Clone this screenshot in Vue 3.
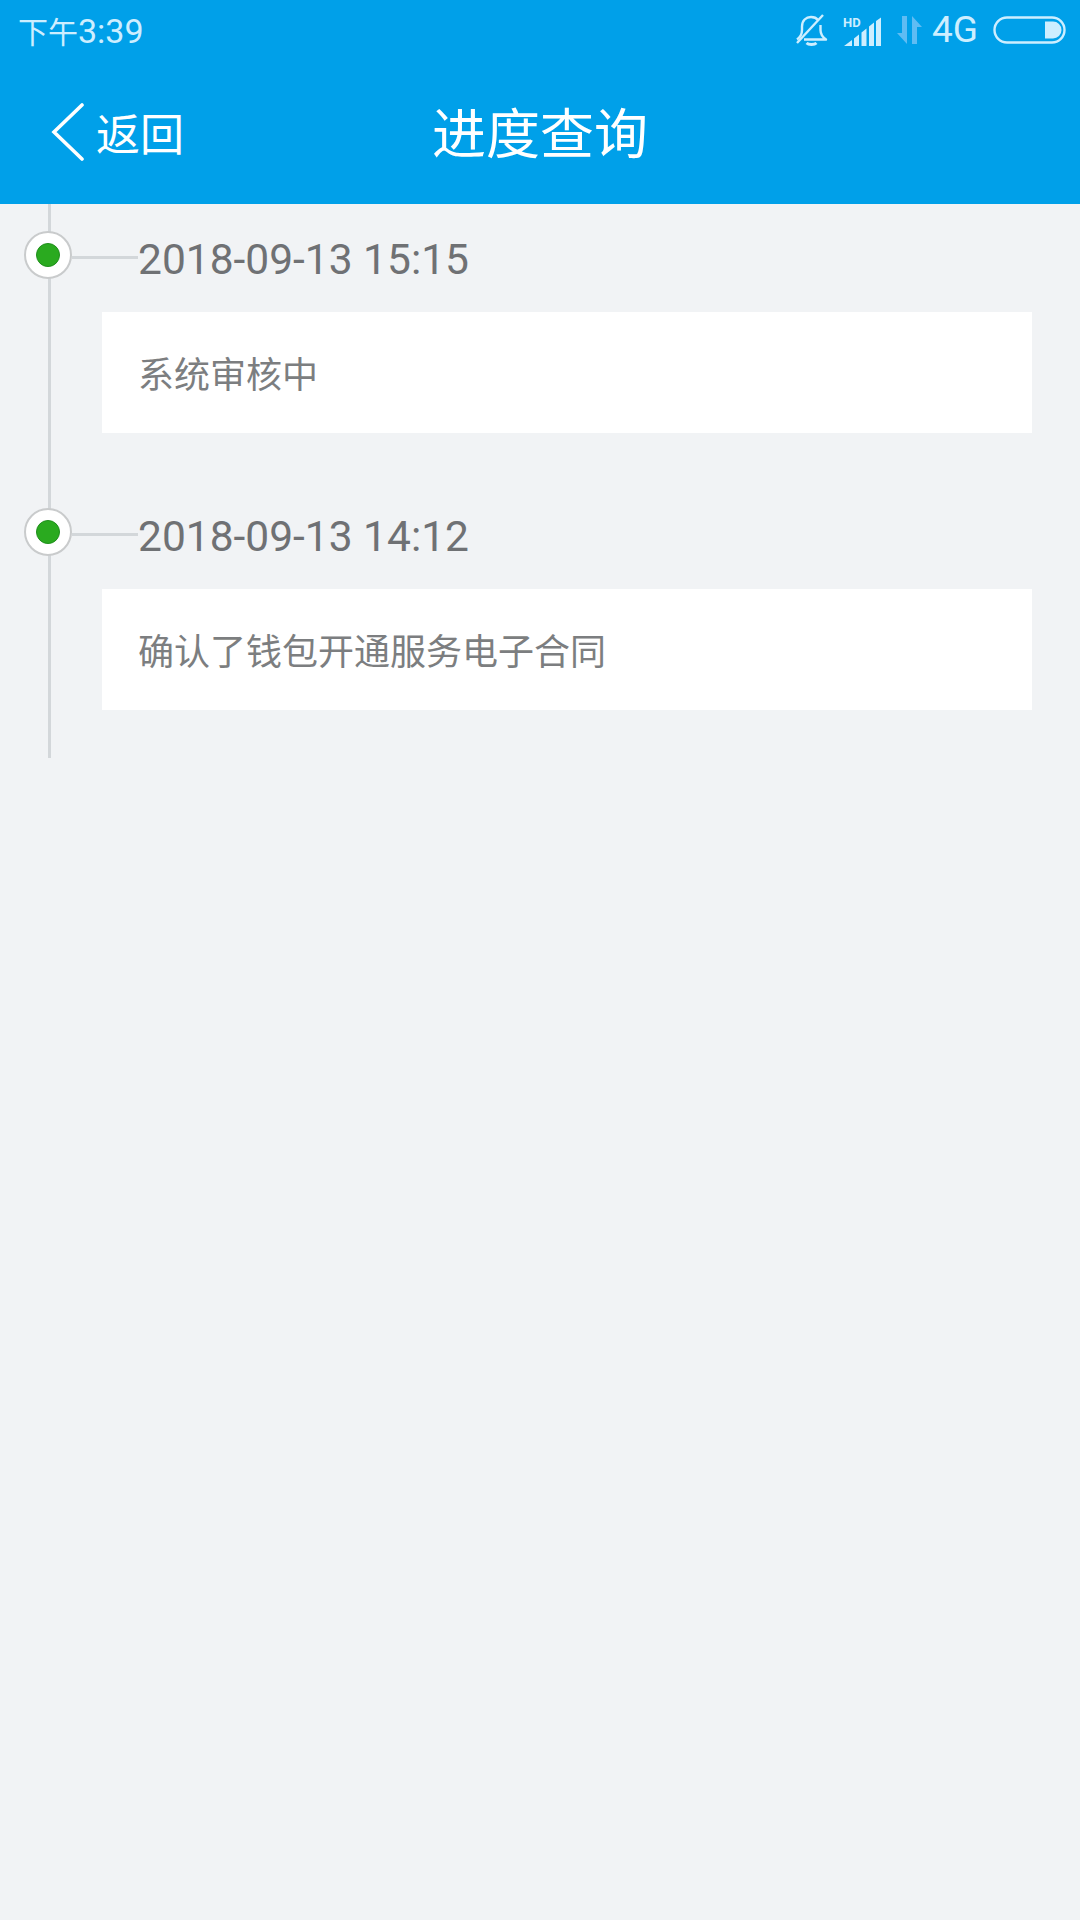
<template>
  <div class="page">
    <header class="top">
      <div class="status-bar">
        <span class="time"><span class="time-cn">下午</span>3:39</span>
        <div class="status-icons">
          <svg class="ic-bell" width="32" height="32" viewBox="0 0 32 32" fill="none" stroke="#cdeeff" stroke-width="2.4">
            <path d="M1 25.500c3.500-2.500 5-5 5-9.500v-3.500C6 6.500 10 3 15 3c3 0 5.500 1 7 3" stroke-linejoin="round" />
            <path d="M24.500 11v5c0 4.500 2 7 5.500 9.500H8" stroke-linejoin="round" />
            <path d="M1 29 27 1" />
            <path d="M10.500 29c2 2 8 2 10 0" stroke-width="2.800" />
          </svg>
          <svg class="ic-signal" width="40" height="34" viewBox="0 -4 40 34" fill="#cdeeff">
            <text x="0" y="10" class="hd">HD</text>
            <path d="M1 29 9 23v6zM11 21.500l5-4V29h-5zM18.500 15.500l5-4V29h-5zM26 9.500l5-4V29h-5zM33 4l5-3.500V29h-5z" />
          </svg>
          <svg class="ic-arrows" width="28" height="28" viewBox="0 0 28 28" fill="#5fbcf3">
            <path d="M6 0h5v28L1 17h5zM16 0l10 11h-5v17h-5z" />
          </svg>
          <span class="net">4G</span>
          <svg class="ic-battery" width="73" height="28" viewBox="0 0 73 28" fill="none">
            <rect x="1.500" y="1.500" width="70" height="25" rx="12.500" stroke="#cdeeff" stroke-width="2.400" />
            <path d="M52 5.500h8a8.500 8.500 0 0 1 0 17h-8z" fill="#cdeeff" />
          </svg>
        </div>
      </div>
      <div class="nav-bar">
        <div class="back">
          <svg width="34" height="58" viewBox="0 0 34 58" fill="none" stroke="#fff" stroke-width="3.600" stroke-linecap="round">
            <path d="M31 2 3 29l28 27" />
          </svg>
          <span>返回</span>
        </div>
        <h1>进度查询</h1>
      </div>
    </header>

    <div class="timeline">
      <div v-for="item in records" :key="item.time" class="record">
        <div class="record-head">
          <span class="dot"><i></i></span>
          <span class="link"></span>
          <span class="date">{{ item.time }}</span>
        </div>
        <div class="card">{{ item.text }}</div>
      </div>
    </div>
  </div>
</template>

<script setup>
const records = [
  { time: '2018-09-13 15:15', text: '系统审核中' },
  { time: '2018-09-13 14:12', text: '确认了钱包开通服务电子合同' },
];
</script>

<style>
html,
body {
  margin: 0;
  background: #f1f3f5;
}
</style>

<style scoped>
.page {
  min-height: 1920px;
  background: #f1f3f5;
  font-family: Roboto, "Noto Sans CJK SC", sans-serif;
}

.top {
  height: 204px;
  background: #00a0e9;
  color: #fff;
}

.status-bar {
  height: 60px;
  display: flex;
  align-items: center;
  justify-content: space-between;
  padding: 0 14px 0 18px;
}

.time {
  font-size: 34px;
  line-height: 58px;
  margin-top: 3px;
  color: #cdeeff;
}

.time-cn {
  font-size: 30px;
}

.status-icons {
  display: flex;
  align-items: center;
}

.ic-bell {
  margin-right: 15px;
}

.ic-arrows {
  margin: 0 8px 0 13px;
}

.hd {
  font-size: 13px;
  font-weight: 700;
  font-family: Roboto, sans-serif;
}

.net {
  font-size: 37px;
  line-height: 44px;
  color: #cdeeff;
  margin-right: 15px;
}

.nav-bar {
  position: relative;
  height: 144px;
  display: flex;
  align-items: center;
  justify-content: center;
}

.back {
  position: absolute;
  left: 51px;
  top: 40px;
  display: flex;
  align-items: center;
  gap: 11px;
  font-size: 44px;
}

.nav-bar h1 {
  margin: 0 0 4px;
  font-size: 54px;
  font-weight: 400;
}

.timeline {
  box-sizing: border-box;
  height: 554px;
  margin-left: 48px;
  border-left: 3px solid #d3d7da;
}

.record {
  padding: 27px 0 0 51px;
  height: 250px;
}

.record-head {
  position: relative;
  height: 81px;
  display: flex;
  align-items: flex-start;
}

.dot {
  position: absolute;
  left: -78px;
  top: 0;
  box-sizing: border-box;
  width: 48px;
  height: 48px;
  border: 2px solid #c9cbcc;
  border-radius: 50%;
  background: #fff;
  display: flex;
  align-items: center;
  justify-content: center;
}

.dot i {
  box-sizing: border-box;
  width: 24px;
  height: 24px;
  border-radius: 50%;
  background: #2aaa1f;
  border: 1px solid #1f8f1c;
}

.link {
  position: absolute;
  left: -30px;
  top: 25px;
  width: 66px;
  height: 3px;
  background: #d3d7da;
}

.date {
  margin-left: 36px;
  font-size: 42.5px;
  line-height: 58px;
  color: #6f7174;
}

.card {
  width: 930px;
  height: 121px;
  box-sizing: border-box;
  padding-left: 36px;
  background: #fff;
  font-size: 36px;
  line-height: 128px;
  color: #7c7e80;
}
</style>
